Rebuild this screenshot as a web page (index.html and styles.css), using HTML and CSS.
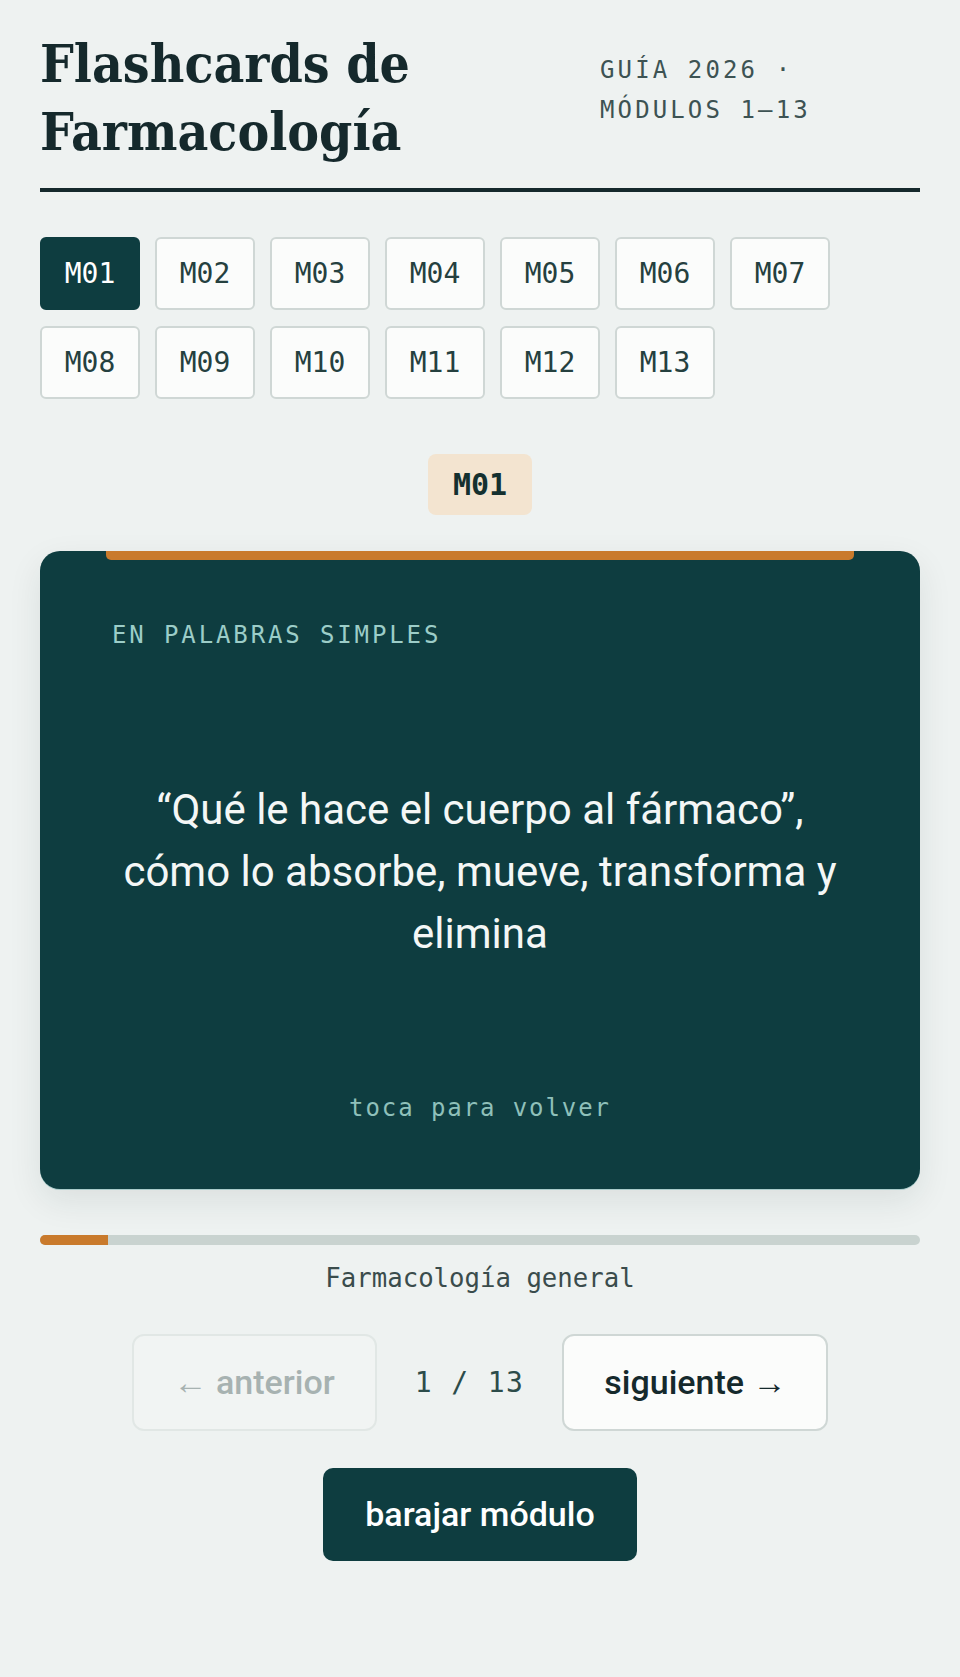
FILE: index.html
```html
<!DOCTYPE html>
<html lang="es">
<head>
<meta charset="utf-8">
<title>Flashcards de Farmacología</title>
<link rel="stylesheet" href="styles.css">
</head>
<body>
<div class="page">
  <header class="header">
    <h1 class="title">Flashcards de<br>Farmacología</h1>
    <div class="meta">GUÍA 2026 · MÓDULOS 1–13</div>
  </header>

  <nav class="modules">
    <button class="mod active">M01</button>
    <button class="mod">M02</button>
    <button class="mod">M03</button>
    <button class="mod">M04</button>
    <button class="mod">M05</button>
    <button class="mod">M06</button>
    <button class="mod">M07</button>
    <button class="mod">M08</button>
    <button class="mod">M09</button>
    <button class="mod">M10</button>
    <button class="mod">M11</button>
    <button class="mod">M12</button>
    <button class="mod">M13</button>
  </nav>

  <div class="badge-row"><span class="badge">M01</span></div>

  <section class="card">
    <div class="card-accent"></div>
    <div class="eyebrow">EN PALABRAS SIMPLES</div>
    <div class="card-body">
      <p class="quote">“Qué le hace el cuerpo al fármaco”, cómo lo absorbe, mueve, transforma y elimina</p>
    </div>
    <div class="hint">toca para volver</div>
  </section>

  <div class="progress"><div class="progress-fill" style="width: 7.69%"></div></div>
  <div class="topic">Farmacología general</div>

  <div class="nav">
    <button class="nav-btn disabled">← anterior</button>
    <span class="counter">1 / 13</span>
    <button class="nav-btn">siguiente →</button>
  </div>

  <div class="shuffle-row"><button class="shuffle">barajar módulo</button></div>
</div>
</body>
</html>
```

FILE: styles.css
```css
* { box-sizing: border-box; }

body {
  margin: 0;
  background: #eef2f1;
  color: #15292c;
  font-family: Roboto, "Liberation Sans", sans-serif;
}

.page {
  width: 960px;
  padding: 29px 40px 60px;
}

.header {
  display: flex;
  justify-content: space-between;
  align-items: flex-start;
  padding-bottom: 23px;
  border-bottom: 4px solid #15292c;
}

.title {
  margin: 0;
  font-family: "DejaVu Serif Condensed", "DejaVu Serif", serif;
  font-stretch: condensed;
  font-weight: 700;
  font-size: 53px;
  line-height: 68px;
  color: #15292c;
}

.meta {
  flex: 0 0 320px;
  margin-top: 21px;
  font-family: "DejaVu Sans Mono", "Liberation Mono", monospace;
  font-size: 24px;
  line-height: 40px;
  letter-spacing: 0.13em;
  color: #3d5353;
}

.modules {
  display: flex;
  flex-wrap: wrap;
  gap: 16px 15px;
  margin-top: 45px;
}

.mod {
  width: 100px;
  height: 73px;
  padding: 0;
  border: 2px solid #cfd7d5;
  border-radius: 6px;
  background: #fbfcfb;
  color: #25403f;
  font-family: "DejaVu Sans Mono", "Liberation Mono", monospace;
  font-size: 28px;
}

.mod.active {
  background: #0e3d40;
  border-color: #0e3d40;
  color: #ffffff;
}

.badge-row {
  display: flex;
  justify-content: center;
  margin-top: 55px;
}

.badge {
  padding: 12px 25px;
  border-radius: 8px;
  background: #f3e4d0;
  color: #14302f;
  font-family: "DejaVu Sans Mono", "Liberation Mono", monospace;
  font-weight: 700;
  font-size: 30px;
  line-height: 37px;
}

.card {
  display: flex;
  flex-direction: column;
  min-height: 638px;
  margin-top: 36px;
  padding: 0 72px 65px;
  border-radius: 20px;
  background: #0e3d40;
  box-shadow: 0 1px 0 #a9cccb, 0 12px 34px rgba(20, 40, 46, 0.09);
}

.card-accent {
  height: 9px;
  margin: 0 -6px;
  border-radius: 0 0 5px 5px;
  background: #c97a2c;
}

.eyebrow {
  margin-top: 59px;
  font-family: "DejaVu Sans Mono", "Liberation Mono", monospace;
  font-size: 24px;
  line-height: 32px;
  letter-spacing: 0.12em;
  color: #9ccdc8;
}

.card-body {
  flex: 1;
  display: flex;
  align-items: center;
  justify-content: center;
}

.quote {
  margin: 0;
  text-align: center;
  font-size: 42px;
  line-height: 62px;
  color: #f4f7f6;
}

.hint {
  text-align: center;
  font-family: "DejaVu Sans Mono", "Liberation Mono", monospace;
  font-size: 24px;
  line-height: 32px;
  letter-spacing: 0.08em;
  color: #8fc0ba;
}

.progress {
  height: 10px;
  margin-top: 46px;
  border-radius: 5px;
  background: #c9d3d0;
  overflow: hidden;
}

.progress-fill {
  height: 100%;
  background: #c97a2c;
}

.topic {
  margin-top: 17px;
  text-align: center;
  font-family: "DejaVu Sans Mono", "Liberation Mono", monospace;
  font-size: 25.7px;
  line-height: 32px;
  color: #3a4c4c;
}

.nav {
  display: flex;
  justify-content: center;
  align-items: center;
  gap: 38px;
  margin-top: 40px;
}

.nav-btn {
  padding: 26px 40px;
  border: 2px solid #cfd7d5;
  border-radius: 12px;
  background: #fbfcfb;
  color: #15292c;
  font-family: Roboto, "Liberation Sans", sans-serif;
  font-weight: 500;
  font-size: 34px;
  line-height: 41px;
}

.nav-btn.disabled {
  background: #f1f4f3;
  border-color: #e1e7e5;
  color: #a7b2b1;
}

.counter {
  font-family: "DejaVu Sans Mono", "Liberation Mono", monospace;
  font-size: 28px;
  letter-spacing: 0.05em;
  color: #2c4c4a;
}

.shuffle-row {
  display: flex;
  justify-content: center;
  margin-top: 37px;
}

.shuffle {
  padding: 26px 42px;
  border: 0;
  border-radius: 10px;
  background: #0e3d40;
  color: #ffffff;
  font-family: Roboto, "Liberation Sans", sans-serif;
  font-weight: 500;
  font-size: 34px;
  line-height: 41px;
}
```
